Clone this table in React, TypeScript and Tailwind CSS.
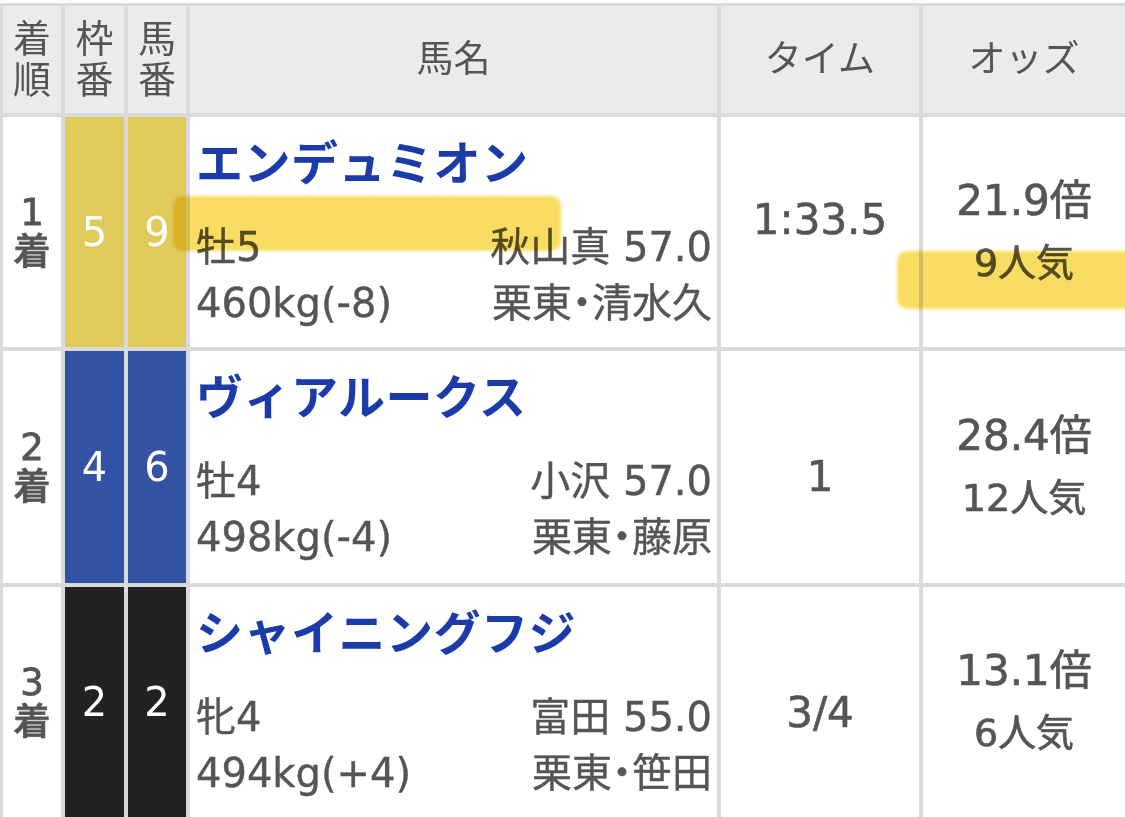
const FONT = { fontFamily: '"DejaVu Sans", "Noto Sans CJK JP", sans-serif' }

const rows = [
  {
    rank: "1",
    frame: "5",
    num: "9",
    frameBg: "bg-[#dfca5a]",
    name: "エンデュミオン",
    sexAge: "牡5",
    jockey: "秋山真 57.0",
    weight: "460kg(-8)",
    trainer: "栗東・清水久",
    time: "1:33.5",
    timePad: "pb-[26px]",
    odds: "21.9倍",
    pop: "9人気",
    h: "h-[230px]",
  },
  {
    rank: "2",
    frame: "4",
    num: "6",
    frameBg: "bg-[#3553a5]",
    name: "ヴィアルークス",
    sexAge: "牡4",
    jockey: "小沢 57.0",
    weight: "498kg(-4)",
    trainer: "栗東・藤原",
    time: "1",
    timePad: "pt-[18px]",
    odds: "28.4倍",
    pop: "12人気",
    h: "h-[232px]",
  },
  {
    rank: "3",
    frame: "2",
    num: "2",
    frameBg: "bg-[#222222]",
    name: "シャイニングフジ",
    sexAge: "牝4",
    jockey: "富田 55.0",
    weight: "494kg(+4)",
    trainer: "栗東・笹田",
    time: "3/4",
    timePad: "pt-[20px]",
    odds: "13.1倍",
    pop: "6人気",
    h: "h-[230px]",
  },
]

export default function App() {
  return (
    <div className="relative h-[817px] w-[1125px] overflow-hidden bg-white" style={FONT}>
      <div className="mt-[3px] grid grid-cols-[58px_59px_58px_527px_198px_1fr] gap-[4px] bg-[#dadada] pl-[3px] pt-[3px] text-[#555555]">
        {/* header */}
        <div className="flex h-[107px] flex-col items-center justify-center gap-[3px] bg-[#ebebeb] text-[38px] leading-none">
          <span>着</span>
          <span>順</span>
        </div>
        <div className="flex h-[107px] flex-col items-center justify-center gap-[3px] bg-[#ebebeb] text-[38px] leading-none">
          <span>枠</span>
          <span>番</span>
        </div>
        <div className="flex h-[107px] flex-col items-center justify-center gap-[3px] bg-[#ebebeb] text-[38px] leading-none">
          <span>馬</span>
          <span>番</span>
        </div>
        <div className="flex h-[107px] items-center justify-center bg-[#ebebeb] text-[37px]">馬名</div>
        <div className="flex h-[107px] items-center justify-center bg-[#ebebeb] text-[37px]">タイム</div>
        <div className="flex h-[107px] items-center justify-center bg-[#ebebeb] text-[37px]">オッズ</div>

        {rows.map((r) => (
          <Row key={r.rank} r={r} />
        ))}
      </div>

      {/* highlighter marks */}
      <div className="pointer-events-none absolute left-[173px] top-[196px] h-[55px] w-[388px] rounded-[10px] bg-[#f9da52] opacity-90 mix-blend-multiply blur-[1.5px]" />
      <div className="pointer-events-none absolute left-[897px] top-[251px] h-[58px] w-[240px] rounded-[10px] bg-[#f9da52] opacity-90 mix-blend-multiply blur-[1.5px]" />
    </div>
  )
}

function Row({ r }: { r: (typeof rows)[number] }) {
  return (
    <>
      <div className={`flex ${r.h} flex-col items-center justify-center gap-[3px] bg-white text-[37px] font-medium leading-none [-webkit-text-stroke:0.8px]`}>
        <span>{r.rank}</span>
        <span>着</span>
      </div>
      <div className={`flex ${r.h} items-center justify-center ${r.frameBg} text-[40px] text-white`}>{r.frame}</div>
      <div className={`flex ${r.h} items-center justify-center ${r.frameBg} text-[40px] text-white`}>{r.num}</div>
      <div className={`flex ${r.h} flex-col bg-white pl-[6px] pr-[5px] pt-[17px]`}>
        <div className="text-[47px] font-bold leading-[60px] tracking-[0.5px] text-[#1b3ca8]">{r.name}</div>
        <div className="mt-[25px] flex justify-between text-[40px] leading-[56px] [-webkit-text-stroke:0.4px]">
          <span>{r.sexAge}</span>
          <span>{r.jockey}</span>
        </div>
        <div className="flex justify-between text-[40px] leading-[56px] [-webkit-text-stroke:0.4px]">
          <span>{r.weight}</span>
          <span className="[font-feature-settings:'palt']">{r.trainer}</span>
        </div>
      </div>
      <div className={`flex ${r.h} items-center justify-center bg-white text-[42px] [-webkit-text-stroke:0.6px] ${r.timePad}`}>{r.time}</div>
      <div className={`flex ${r.h} flex-col items-center justify-center bg-white [-webkit-text-stroke:0.7px]`}>
        <span className="text-[42px] leading-[62px]">{r.odds}</span>
        <span className="text-[38px] leading-[62px]">{r.pop}</span>
      </div>
    </>
  )
}
